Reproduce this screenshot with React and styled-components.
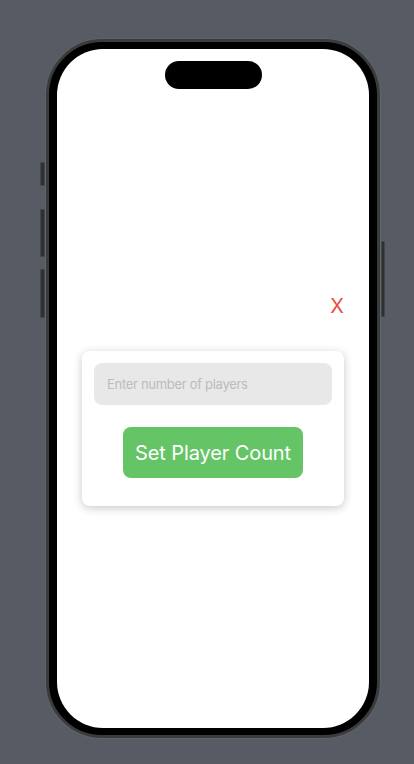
import styled, { createGlobalStyle } from "styled-components";

const GlobalStyle = createGlobalStyle`
  html, body {
    margin: 0;
    padding: 0;
    background: #575c64;
  }
  * {
    box-sizing: border-box;
  }
`;

const App = () => {
  return (
    <>
      <GlobalStyle />
      <Page>
        <Phone>
          <SideButton $top={120} $height={24} />
          <SideButton $top={167} $height={48} />
          <SideButton $top={227} $height={49} />
          <PowerButton />
          <Screen>
            <Island />
            <Stage>
              <CloseRow>
                <CloseText>X</CloseText>
              </CloseRow>
              <Card>
                <PlayerInput placeholder="Enter number of players" />
                <SetButton>Set Player Count</SetButton>
              </Card>
            </Stage>
          </Screen>
        </Phone>
      </Page>
    </>
  );
};

export default App;

const Page = styled.div`
  width: 414px;
  height: 764px;
  padding: 39px 0 0 46px;
`;

const Phone = styled.div`
  position: relative;
  width: 334px;
  height: 699px;
  padding: 7px 8px;
  border-radius: 56px;
  border: 3px solid #3a3b3d;
  background: #000;
  box-shadow: 0 0 0 1px #606368;
`;

const SideButton = styled.div`
  position: absolute;
  left: -9px;
  top: ${({ $top }) => $top}px;
  width: 5px;
  height: ${({ $height }) => $height}px;
  border-radius: 1px;
  background: #2f3032;
  border: 1px solid #44464a;
`;

const PowerButton = styled.div`
  position: absolute;
  right: -8px;
  top: 199px;
  width: 4px;
  height: 76px;
  border-radius: 1px;
  background: #2f3032;
  border: 1px solid #44464a;
`;

const Screen = styled.div`
  display: flex;
  flex-direction: column;
  align-items: center;
  width: 100%;
  height: 100%;
  border-radius: 46px;
  background: #fff;
  overflow: hidden;
`;

const Island = styled.div`
  flex: none;
  width: 97px;
  height: 28px;
  margin-top: 12px;
  border-radius: 14px;
  background: #000;
`;

const Stage = styled.div`
  display: flex;
  flex-direction: column;
  width: 100%;
  padding: 205px 25px 0;
`;

const CloseRow = styled.div`
  display: flex;
  justify-content: flex-end;
  margin-bottom: 33px;
`;

const CloseText = styled.span`
  font-family: Inter, "Noto Sans", sans-serif;
  font-size: 20px;
  line-height: 24px;
  color: #e94e3f;
`;

const Card = styled.div`
  display: flex;
  flex-direction: column;
  align-items: center;
  gap: 22px;
  padding: 12px 12px 28px;
  border-radius: 8px;
  background: #fff;
  box-shadow: 0 2px 10px rgba(0, 0, 0, 0.22);
`;

const PlayerInput = styled.input`
  width: 100%;
  height: 42px;
  padding: 0 13px;
  border: none;
  border-radius: 8px;
  background: #e8e8e8;
  font-family: Inter, "Noto Sans", sans-serif;
  font-size: 13px;
  letter-spacing: -0.3px;
  color: #333;
  outline: none;

  &::placeholder {
    color: #bcbcbc;
  }
`;

const SetButton = styled.button`
  width: 180px;
  height: 51px;
  padding: 0;
  border: none;
  border-radius: 8px;
  background: #65c466;
  color: #fff;
  font-family: Inter, "Noto Sans", sans-serif;
  font-size: 20px;
  letter-spacing: -0.1px;
  cursor: pointer;
`;
